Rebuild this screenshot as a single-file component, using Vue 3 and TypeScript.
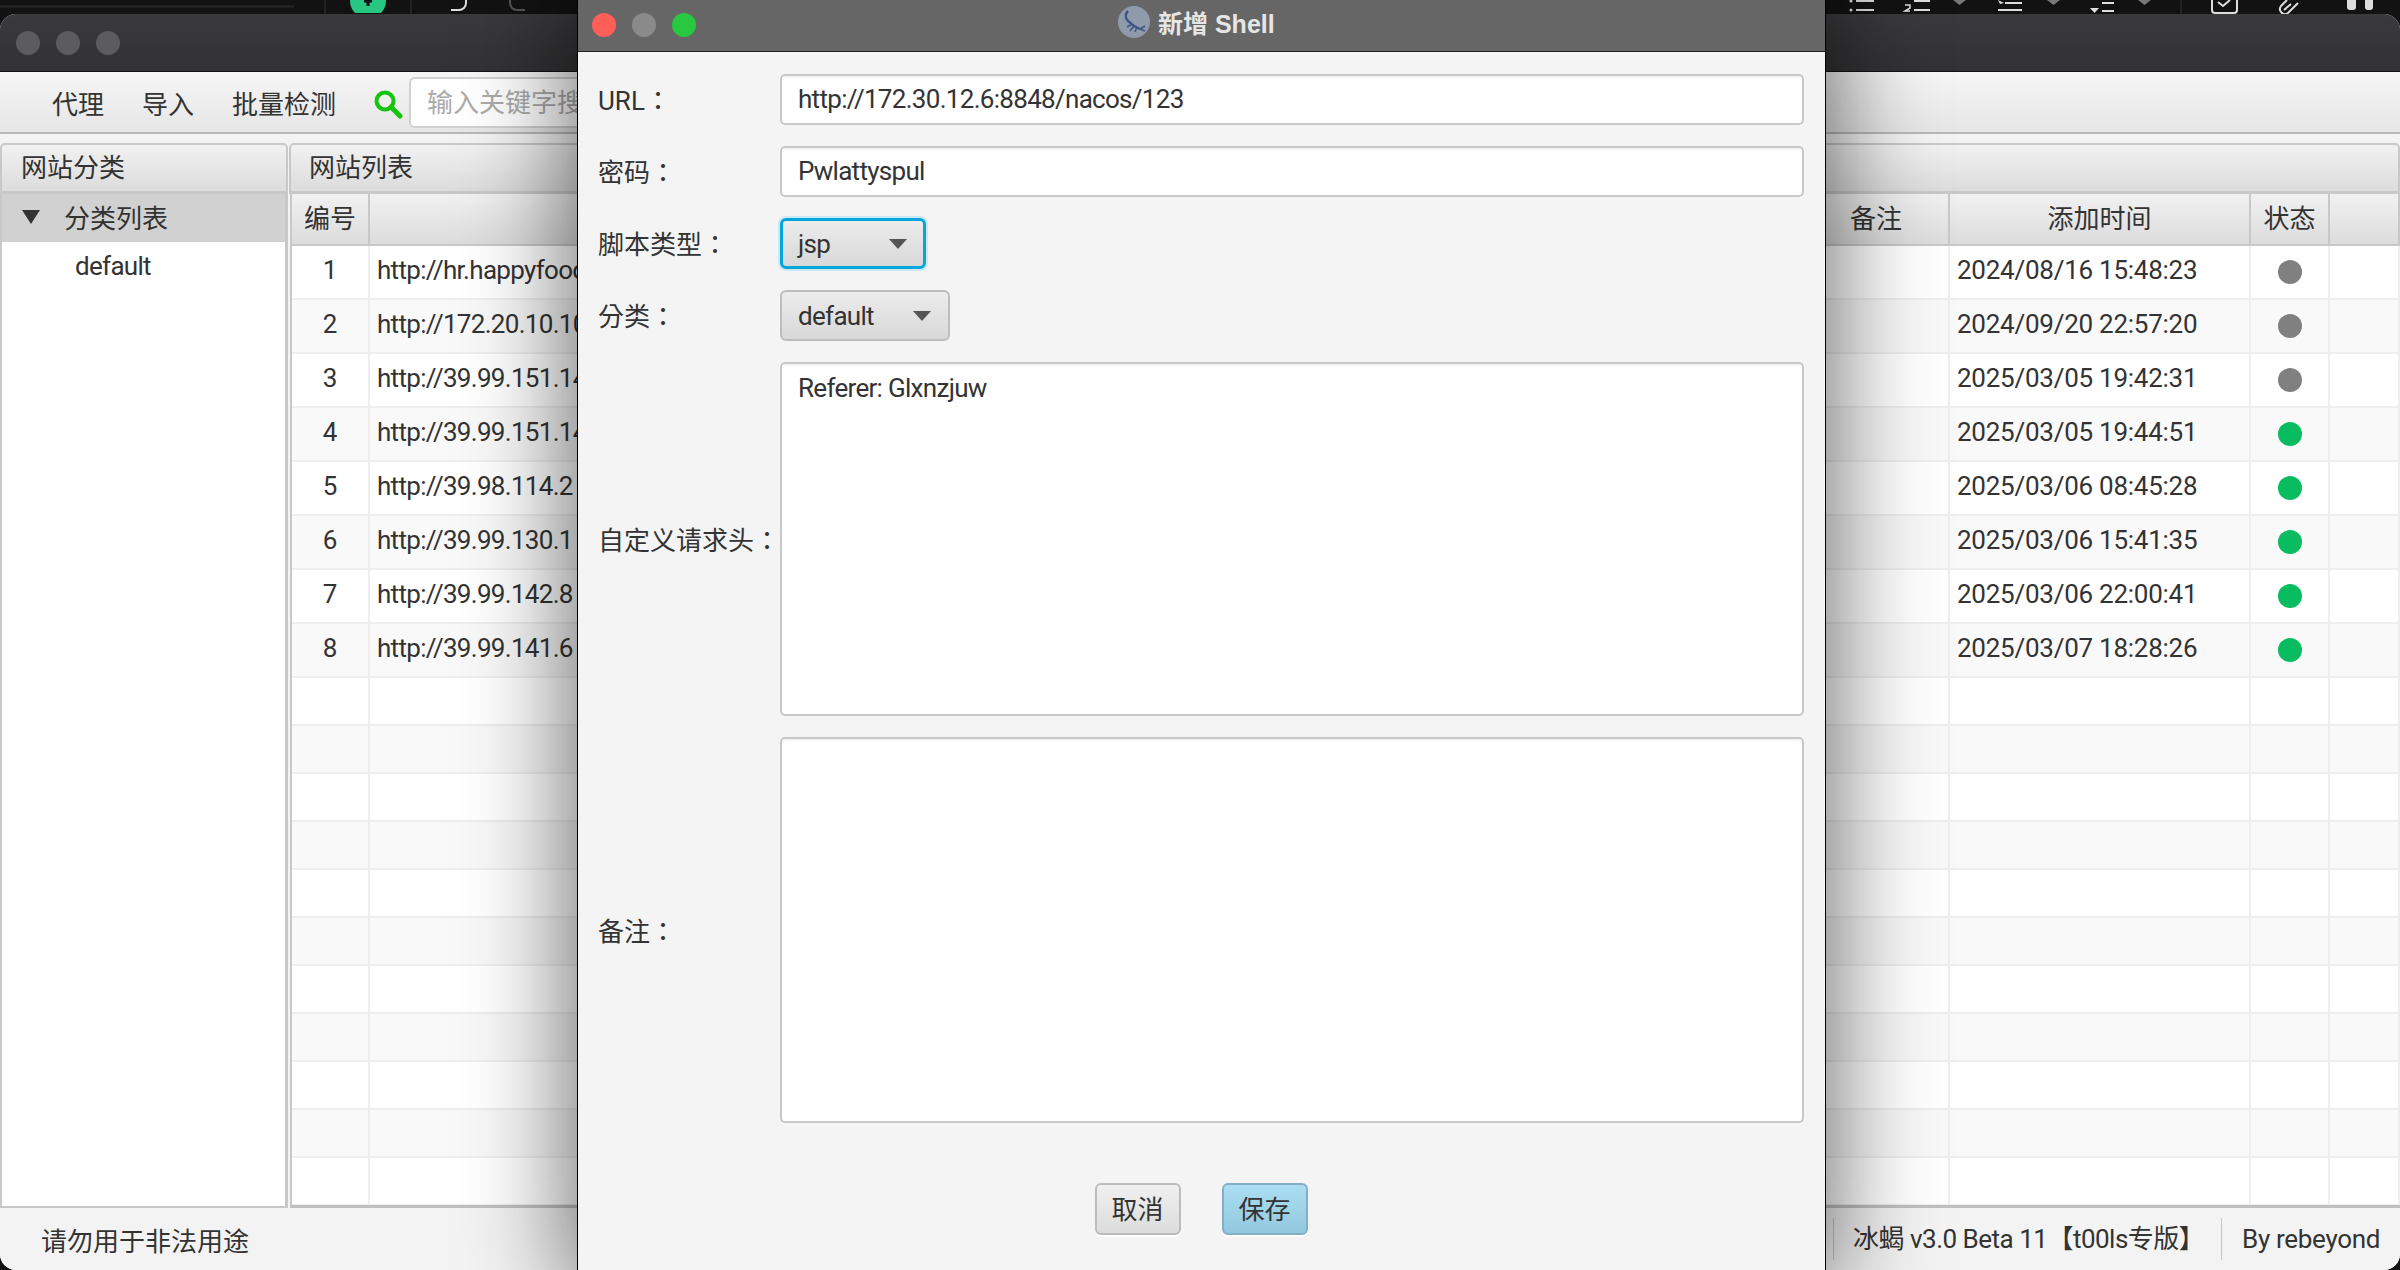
<script setup lang="ts">
const rows = [
  { id: 1, url: "http://hr.happyfood", time: "2024/08/16 15:48:23", on: false },
  { id: 2, url: "http://172.20.10.10", time: "2024/09/20 22:57:20", on: false },
  { id: 3, url: "http://39.99.151.14", time: "2025/03/05 19:42:31", on: false },
  { id: 4, url: "http://39.99.151.14", time: "2025/03/05 19:44:51", on: true },
  { id: 5, url: "http://39.98.114.2", time: "2025/03/06 08:45:28", on: true },
  { id: 6, url: "http://39.99.130.1", time: "2025/03/06 15:41:35", on: true },
  { id: 7, url: "http://39.99.142.8", time: "2025/03/06 22:00:41", on: true },
  { id: 8, url: "http://39.99.141.6", time: "2025/03/07 18:28:26", on: true },
];
const emptyRows = 11;
</script>

<template>
  <div class="screen">
    <div class="host-strip">
      <svg width="560" height="14" viewBox="0 0 560 14" fill="none" stroke-width="2">
        <path d="M0 6.5h294" stroke="#262626" />
        <path d="M325 0v14M411 0v14" stroke="#222" />
        <path d="M350 0h36a18 18 0 0 1-5 13h-26a18 18 0 0 1-5-13z" fill="#27c683" />
        <path d="M368 0v6M364 1h8" stroke="#111" stroke-width="3" />
        <path d="M451 10h8a7 7 0 0 0 7-7V0" stroke="#ddd" />
        <path d="M525 10h-8a7 7 0 0 1-7-7V0" stroke="#555" />
      </svg>
      <span class="host-spacer"></span>
      <svg width="575" height="14" viewBox="0 0 575 14" fill="none" stroke="#ddd" stroke-width="2">
        <path d="M31 1h18M31 10h18" />
        <circle cx="26" cy="10" r="1.5" fill="#ddd" stroke="none" />
        <circle cx="26" cy="1" r="1.5" fill="#ddd" stroke="none" />
        <path d="M89 1h16M89 10h16" />
        <path d="M80 5h5v3l-5 3h5" stroke-width="1.5" />
        <path d="M128 0h13l-6.5 5z" fill="#777" stroke="none" />
        <path d="M173 10h24M180 3h17" />
        <path d="M173 0l6 3-4 1z" fill="#ddd" stroke="none" />
        <path d="M222 0h13l-6.500 5z" fill="#777" stroke="none" />
        <path d="M265 8h9l-4.500 5z" fill="#ddd" stroke="none" />
        <path d="M277 3h12M277 11h12" />
        <path d="M313 0h13l-6.500 5z" fill="#777" stroke="none" />
        <path d="M356 0v14" stroke="#222" />
        <path d="M387 0v10a3 3 0 0 0 3 3h19a3 3 0 0 0 3-3V0M393 2l5 4 7-6" />
        <path d="M462 0l-6 6a5 5 0 0 0 7 7l10-10M466 4l-7 6" />
        <path d="M522 0h9v7a3 3 0 0 1-3 3h-3a3 3 0 0 1-3-3zM540 0h8v7a3 3 0 0 1-3 3h-2a3 3 0 0 1-3-3z" fill="#ddd" stroke="none" />
      </svg>
    </div>

    <div class="window">
      <div class="titlebar">
        <span class="light"></span>
        <span class="light"></span>
        <span class="light"></span>
      </div>

      <div class="toolbar">
        <span class="tool">代理</span>
        <span class="tool">导入</span>
        <span class="tool">批量检测</span>
        <svg class="search-icon" width="30" height="30" viewBox="0 0 30 30" fill="none" stroke="#16c40e">
          <circle cx="12" cy="12" r="8.5" stroke-width="4" />
          <path d="M18 18l9 9" stroke-width="5" stroke-linecap="round" />
        </svg>
        <div class="search-box">输入关键字搜索</div>
      </div>

      <div class="panes">
        <section class="pane pane-left">
          <header class="pane-head">网站分类</header>
          <div class="tree">
            <div class="tree-root">
              <i class="tree-arrow"></i>
              <span>分类列表</span>
            </div>
            <div class="tree-item latin">default</div>
          </div>
        </section>

        <section class="pane pane-right">
          <header class="pane-head">网站列表</header>
          <div class="table">
            <div class="tr thead">
              <div class="th">编号</div>
              <div class="th"></div>
              <div class="th">备注</div>
              <div class="th">添加时间</div>
              <div class="th">状态</div>
              <div class="th"></div>
            </div>
            <div v-for="r in rows" :key="r.id" class="tr row">
              <div class="td num">{{ r.id }}</div>
              <div class="td latin">{{ r.url }}</div>
              <div class="td"></div>
              <div class="td time">{{ r.time }}</div>
              <div class="td center"><span class="dot" :class="{ on: r.on }"></span></div>
              <div class="td"></div>
            </div>
            <div v-for="n in emptyRows" :key="n" class="tr row empty">
              <div class="td"></div>
              <div class="td"></div>
              <div class="td"></div>
              <div class="td"></div>
              <div class="td"></div>
              <div class="td"></div>
            </div>
          </div>
        </section>
      </div>

      <div class="statusbar">
        <span class="status-left">请勿用于非法用途</span>
        <span class="status-version">冰蝎 v3.0 Beta 11【t00ls专版】</span>
        <span class="status-author">By rebeyond</span>
      </div>
    </div>

    <div class="dialog">
      <div class="dialog-title">
        <span class="red"></span>
        <span class="gray"></span>
        <span class="green"></span>
        <div class="dialog-caption">
          <svg width="32" height="32" viewBox="0 0 32 32">
            <circle cx="16" cy="16" r="16" fill="#8f9bab" />
            <path d="M10 5c-3 3-3 7 0 10l6 5 6 3" fill="none" stroke="#3f5588" stroke-width="2.500" />
            <path d="M14 18l-5 3M16 20l-4 5M19 21l-2 5M22 23l5-3M22 23l5 2" fill="none" stroke="#3f5588" stroke-width="1.500" />
          </svg>
          <span>新增 Shell</span>
        </div>
      </div>

      <div class="form">
        <div class="field">
          <label>URL：</label>
          <div class="input latin">http://172.30.12.6:8848/nacos/123</div>
        </div>
        <div class="field">
          <label>密码：</label>
          <div class="input latin">Pwlattyspul</div>
        </div>
        <div class="field">
          <label>脚本类型：</label>
          <div class="combo focused latin"><span>jsp</span><i></i></div>
        </div>
        <div class="field">
          <label>分类：</label>
          <div class="combo wide latin"><span>default</span><i></i></div>
        </div>
        <div class="field field-grow">
          <label>自定义请求头：</label>
          <div class="input area headers latin">Referer: Glxnzjuw</div>
        </div>
        <div class="field field-grow">
          <label>备注：</label>
          <div class="input area notes"></div>
        </div>
        <div class="actions">
          <button class="btn" type="button">取消</button>
          <button class="btn primary" type="button">保存</button>
        </div>
      </div>
    </div>
  </div>
</template>

<style scoped>
.screen {
  position: relative;
  width: 2400px;
  height: 1270px;
  overflow: hidden;
  background: #121212;
  color: #333;
  font-family: Roboto, "Noto Sans CJK SC", sans-serif;
  font-size: 26px;
  font-weight: 400;
  display: flex;
  flex-direction: column;
}

.latin {
  letter-spacing: -0.7px;
}

.host-strip {
  height: 14px;
  flex: none;
  display: flex;
  overflow: hidden;
}

.host-spacer {
  flex: 1;
}

.window {
  flex: 1;
  min-height: 0;
  display: flex;
  flex-direction: column;
  border-radius: 16px;
  overflow: hidden;
  background: #f3f3f3;
}

.titlebar {
  height: 58px;
  flex: none;
  display: flex;
  align-items: center;
  gap: 16px;
  padding-left: 16px;
  background: linear-gradient(#3a3a3c, #323234);
  border-bottom: 1px solid #111;
  box-sizing: border-box;
}

.light {
  width: 24px;
  height: 24px;
  border-radius: 50%;
  background: #5c5c5e;
}

.toolbar {
  height: 62px;
  flex: none;
  box-sizing: border-box;
  display: flex;
  align-items: center;
  padding-left: 52px;
  background: linear-gradient(#f6f6f6, #e6e6e6);
  border-bottom: 2px solid #b9b9b9;
}

.tool {
  margin-right: 38px;
  padding-top: 1px;
}

.search-icon {
  flex: none;
  margin-left: -1px;
  margin-top: 3px;
}

.search-box {
  width: 400px;
  height: 51px;
  box-sizing: border-box;
  margin-left: 6px;
  padding-left: 16px;
  border: 2px solid #d0d0d0;
  border-radius: 6px;
  background: #fff;
  color: #aaa;
  line-height: 48px;
}

.panes {
  flex: 1;
  min-height: 0;
  display: grid;
  grid-template-columns: 288px 1fr;
  padding-top: 9px;
  background: #f3f3f3;
}

.pane {
  min-width: 0;
  display: flex;
  flex-direction: column;
  overflow: hidden;
}

.pane-head {
  height: 51px;
  flex: none;
  box-sizing: border-box;
  padding-left: 19px;
  line-height: 46px;
  background: linear-gradient(#f1f1f1, #dcdcdc);
  border: 2px solid #c8c8c8;
  border-bottom-width: 3px;
  border-radius: 5px 5px 0 0;
}

.pane-right .pane-head {
  margin-left: 1px;
  padding-left: 18px;
}

.tree {
  flex: 1;
  background: #fff;
  border-left: 2px solid #c8c8c8;
  border-right: 3px solid #c8c8c8;
  border-bottom: 2px solid #c8c8c8;
}

.tree-root {
  height: 48px;
  box-sizing: border-box;
  padding: 0 0 3px 20px;
  display: flex;
  align-items: center;
  background: #d1d1d1;
}

.tree-arrow {
  width: 0;
  height: 0;
  margin-right: 24px;
  border-left: 9px solid transparent;
  border-right: 9px solid transparent;
  border-top: 14px solid #333;
}

.tree-item {
  height: 48px;
  padding-left: 73px;
  line-height: 48px;
}

.table {
  flex: 1;
  min-height: 0;
  overflow: hidden;
  background: #fff;
  border-left: 2px solid #c8c8c8;
  border-bottom: 3px solid #c0c0c0;
  margin-left: 2px;
}

.tr {
  display: grid;
  grid-template-columns: 78px 1434px 146px 301px 79px 1fr;
}

.thead {
  height: 52px;
  box-sizing: border-box;
  border-bottom: 3px solid #c8c8c8;
}

.th {
  box-sizing: border-box;
  text-align: center;
  line-height: 50px;
  background: linear-gradient(#f1f1f1, #dcdcdc);
  border-right: 2px solid #c8c8c8;
}

.row {
  height: 54px;
  box-sizing: border-box;
  border-bottom: 2px solid #eee;
}

.row:nth-child(odd) {
  background: #f9f9f9;
}

.row.empty {
  height: 48px;
}

.td {
  box-sizing: border-box;
  padding-left: 7px;
  line-height: 48px;
  white-space: nowrap;
  overflow: hidden;
  border-right: 2px solid #eee;
}

.time {
  letter-spacing: -0.25px;
}

.num {
  padding-left: 0;
  text-align: center;
}

.center {
  display: flex;
  align-items: center;
  justify-content: center;
  padding-left: 0;
}

.dot {
  width: 24px;
  height: 24px;
  border-radius: 50%;
  background: #808080;
}

.dot.on {
  background: #09bc5f;
}

.statusbar {
  height: 62px;
  flex: none;
  display: flex;
  align-items: center;
  background: #f3f3f3;
}

.status-left {
  flex: 1;
  padding-left: 41px;
}

.status-version {
  width: 388px;
  box-sizing: border-box;
  padding-left: 19px;
  border-left: 1px solid #c8c8c8;
  line-height: 42px;
  white-space: nowrap;
  letter-spacing: -0.5px;
}

.status-author {
  width: 179px;
  box-sizing: border-box;
  padding-left: 20px;
  border-left: 1px solid #c8c8c8;
  line-height: 42px;
  white-space: nowrap;
  letter-spacing: -0.3px;
}

/* floats over the main window */
.dialog {
  position: absolute;
  left: 577px;
  top: -16px;
  bottom: -16px;
  width: 1249px;
  display: flex;
  flex-direction: column;
  box-sizing: border-box;
  border-left: 1px solid #000;
  border-right: 1px solid #000;
  border-radius: 16px;
  background: #f4f4f4;
  box-shadow: 0 0 100px 10px rgba(0, 0, 0, 0.55);
}

.dialog-title {
  position: relative;
  height: 68px;
  padding-top: 14px;
  box-sizing: border-box;
  flex: none;
  display: flex;
  align-items: center;
  gap: 16px;
  padding-left: 14px;
  background: #666;
  border-bottom: 1px solid #222;
  border-radius: 16px 16px 0 0;
}

.dialog-title > span {
  width: 24px;
  height: 24px;
  border-radius: 50%;
}

.red { background: #ff5f57; }
.gray { background: #8a8a8a; }
.green { background: #28c940; }

.dialog-caption {
  position: absolute;
  left: 540px;
  top: 20px;
  display: flex;
  align-items: center;
  gap: 8px;
  color: #e6e6e6;
  font-family: "Liberation Sans", "Noto Sans CJK SC", sans-serif;
  font-size: 25px;
  font-weight: 700;
}

.form {
  flex: 1;
  min-height: 0;
  display: flex;
  flex-direction: column;
  gap: 21px;
  padding: 22px 21px 35px 20px;
  background: #f4f4f4;
}

.field {
  display: flex;
  align-items: center;
}

.field label {
  width: 182px;
  flex: none;
  padding-bottom: 2px;
  white-space: nowrap;
  font-family: Roboto, "Noto Sans CJK TC", sans-serif;
}

.input {
  flex: 1;
  height: 51px;
  box-sizing: border-box;
  padding-left: 16px;
  border: 2px solid #c8c8c8;
  border-radius: 5px;
  background: #fff;
  line-height: 47px;
  box-shadow: inset 0 3px 3px -2px rgba(0, 0, 0, 0.08);
}

.area {
  padding-top: 4px;
  line-height: 40px;
}

.headers {
  height: 354px;
}

.notes {
  height: 386px;
}

.combo {
  width: 146px;
  height: 51px;
  box-sizing: border-box;
  display: flex;
  align-items: center;
  justify-content: space-between;
  padding: 0 17px 0 16px;
  border: 2px solid #bdbdbd;
  border-radius: 6px;
  background: linear-gradient(#ececec, #d8d8d8);
}

.combo.wide {
  width: 170px;
}

.combo.focused {
  padding: 0 16px 0 15px;
  border: 3px solid #04a7dc;
  box-shadow: 0 0 0 2px #cbe9f5;
}

.combo i {
  width: 0;
  height: 0;
  border-left: 9px solid transparent;
  border-right: 9px solid transparent;
  border-top: 10px solid #555;
}

.actions {
  margin-top: 39px;
  display: flex;
  justify-content: center;
  gap: 41px;
}

.btn {
  width: 86px;
  height: 52px;
  padding: 0 0 4px;
  font: inherit;
  color: #333;
  border: 2px solid #bcbcbc;
  border-radius: 6px;
  background: linear-gradient(#f0f0f0, #dcdcdc);
  box-shadow: 0 2px 0 #fff;
}

.primary {
  border-color: #84aec2;
  background: linear-gradient(#abdef2, #92c8de);
}
</style>

<style>
html,
body {
  margin: 0;
  background: #121212;
}
</style>
